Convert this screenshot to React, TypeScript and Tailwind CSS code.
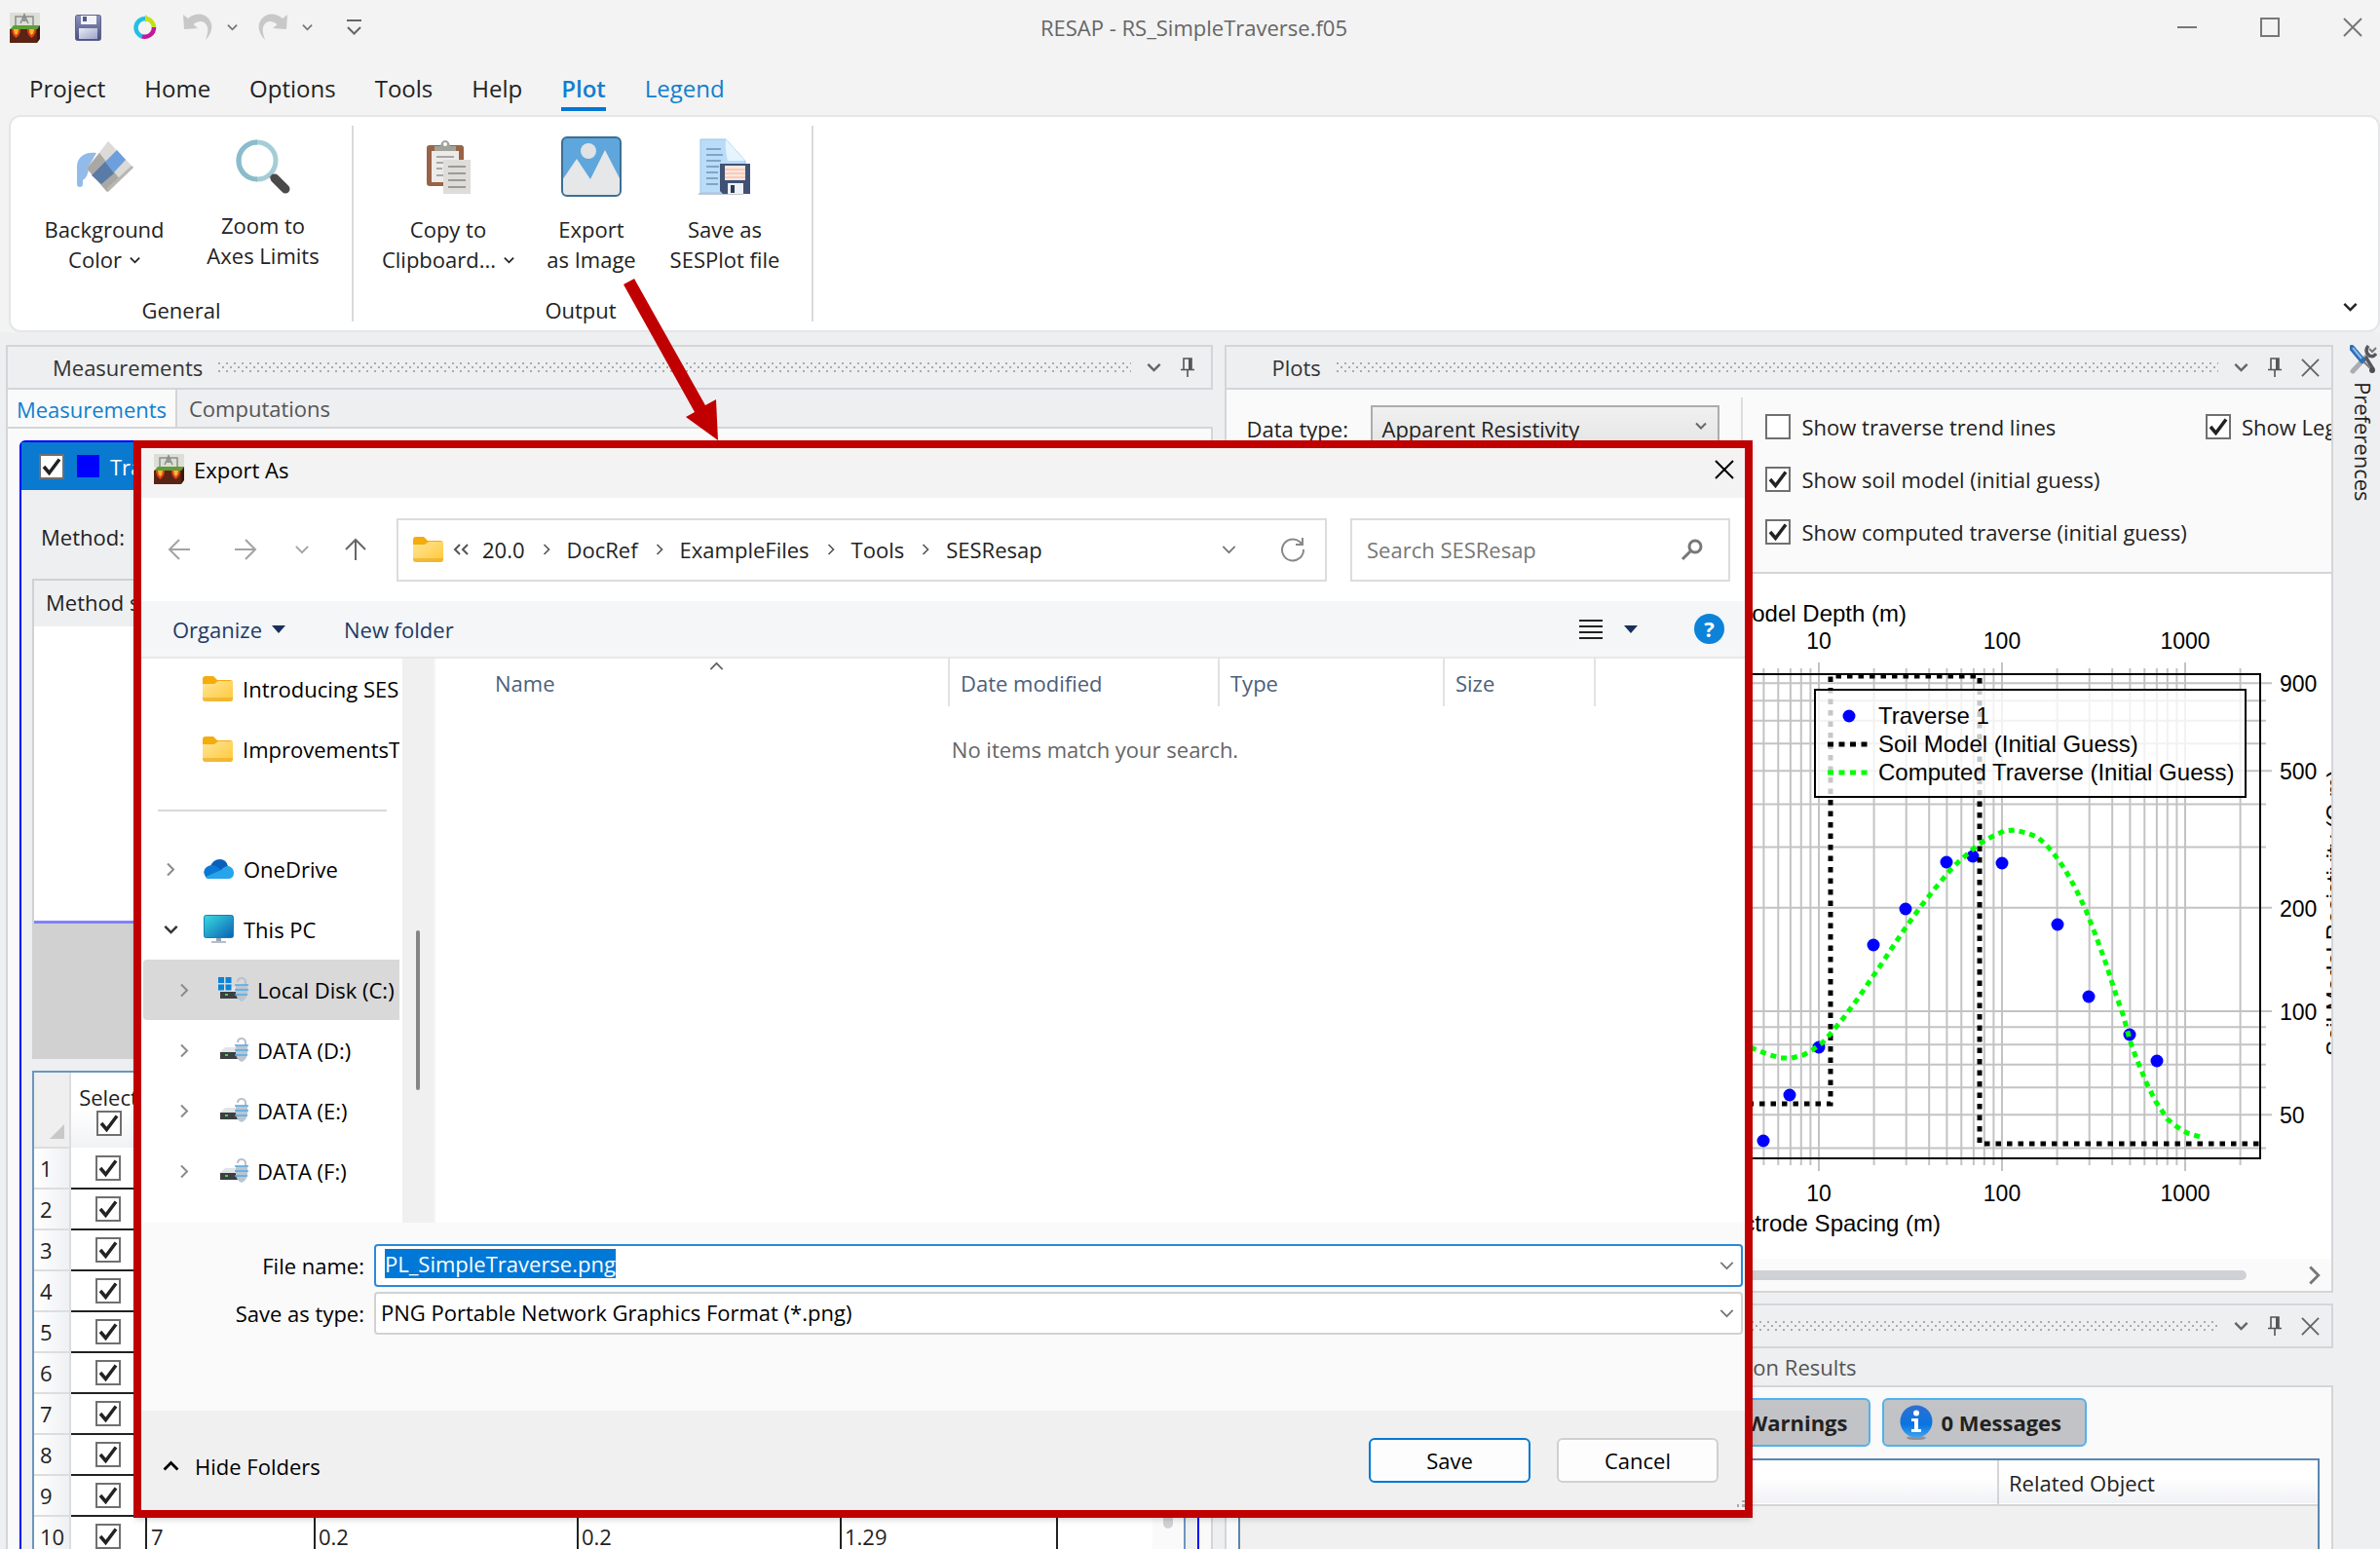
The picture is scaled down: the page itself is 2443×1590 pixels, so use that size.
import { useEffect, useRef, type ReactNode } from 'react';
import { clsx } from 'clsx';

const Chevron = ({ className, dir = 'down' }: { className?: string; dir?: 'down' | 'up' | 'right' }) => {
  const paths = { down: 'M1 4l5 5 5-5', up: 'M1 9l5-5 5 5', right: 'M3 1l6 6-6 6' };
  return (
    <svg viewBox={dir === 'right' ? '0 0 12 14' : '0 0 12 13'} className={clsx('shrink-0', className)} fill="none" stroke="currentColor" strokeWidth="2">
      <path d={paths[dir]} />
    </svg>
  );
};

const Cross = ({ className }: { className?: string }) => (
  <svg viewBox="0 0 20 20" className={clsx('shrink-0', className)} fill="none" stroke="currentColor" strokeWidth="2">
    <path d="M1 1l18 18M19 1L1 19" />
  </svg>
);

const PinIcon = () => (
  <svg viewBox="0 0 14 20" className="h-5 w-3.5 shrink-0" fill="none" stroke="#555" strokeWidth="1.6">
    <path d="M3 12V1h8v11M0 12.5h14M7 13v7" />
    <path d="M9.5 1v11" strokeWidth="3" />
  </svg>
);

const AppIcon = () => (
  <svg viewBox="0 0 31 31" className="size-[31px] shrink-0">
    <path d="M0 0h31v14H0z" fill="#dcdfd6" />
    <path d="M6 14V4h18v10M11 11l4-9 4 9M12 8h6M15 1v8" fill="none" stroke="#8a8f8c" strokeWidth="1.5" />
    <path d="M0 17l4-4h27l-3 4z" fill="#5f9e34" />
    <path d="M0 17h28v14H0z" fill="#5a2414" />
    <path d="M28 17l3-4v14l-3 4z" fill="#3c170c" />
    <path d="M2 17h9q0 6-4.500 9-4.500-3-4.500-9zM18 17h9q0 6-4.500 9-4.500-3-4.500-9z" fill="#e2401c" />
    <path d="M4 17h5q0 4-2.500 6-2.500-2-2.500-6zM20 17h5q0 4-2.500 6-2.500-2-2.500-6z" fill="#f7b92c" />
  </svg>
);

const SaveIcon = () => (
  <svg viewBox="0 0 27 27" className="size-[27px]">
    <defs>
      <linearGradient id="disk" x1="0" y1="0" x2="0" y2="1">
        <stop offset="0" stopColor="#8a93bd" />
        <stop offset="1" stopColor="#4a4f7c" />
      </linearGradient>
      <linearGradient id="diskLabel" x1="0" y1="0" x2="1" y2="1">
        <stop offset="0" stopColor="#e9ebf5" />
        <stop offset="1" stopColor="#9ba3c9" />
      </linearGradient>
    </defs>
    <rect x="0.5" y="0.5" width="26" height="26" rx="2" fill="url(#disk)" stroke="#5d6390" />
    <path d="M6 1h16v9H6z" fill="#f3f4fa" />
    <path d="M8 2h4v5H8z" fill="#4f5b96" />
    <path d="M4 14h19v11H4z" fill="url(#diskLabel)" />
  </svg>
);

const RingIcon = () => (
  <svg viewBox="0 0 24 26" className="h-[26px] w-6" fill="none" strokeWidth="4.500">
    <path d="M12 4A9.500 9.500 0 0 1 21 14" stroke="#c3e01a" />
    <path d="M21 13A9.500 9.500 0 0 1 8 22" stroke="#c2189c" />
    <path d="M9 22.500A9.500 9.500 0 0 1 12 4" stroke="#1fc0e4" />
    <path d="M12 0l5 4-5 4z" fill="#c3e01a" />
  </svg>
);

const UndoIcon = ({ className }: { className?: string }) => (
  <svg viewBox="0 0 32 28" className={clsx('h-7 w-8', className)} fill="#c8c8c8">
    <path d="M1 1l1 15 14-1-4.500-4C17 6 24 7 26 14c1 5-1 9-2 13 6-6 8-14 5-19C25-1 13-2 6 5z" />
  </svg>
);

const BucketIcon = () => (
  <svg viewBox="0 0 60 56" className="h-14 w-[60px]">
    <path d="M22 14C8 12 2 20 2 28v18q0 3 3 3t3-3v-4q6-4 6-14z" fill="#93bbea" />
    <path d="M12 30L34 2l26 27-27 25z" fill="#dcdad6" />
    <path d="M12 30l13-16 21 27-13 13z" fill="#aaa8a4" />
    <path d="M31 23l12-12 9 10-13 14z" fill="#6d9fdc" />
    <path d="M17 37l14-14 9 12-13 11z" fill="#5a7ba6" />
    <path d="M33 50l25-23 2 2-26 25z" fill="#b9b7b3" />
  </svg>
);

const MagnifierIcon = () => (
  <svg viewBox="0 0 56 56" className="size-14" fill="none">
    <circle cx="22" cy="22" r="19" stroke="#a5cdd8" strokeWidth="5" />
    <path d="M22 3a19 19 0 0 0 0 38" stroke="#8abccb" strokeWidth="5" />
    <path d="M36 37l5 5" stroke="#8a8a8a" strokeWidth="5" />
    <path d="M40 40l11 11" stroke="#4a4a4a" strokeWidth="9" strokeLinecap="round" />
  </svg>
);

const ClipboardIcon = () => (
  <svg viewBox="0 0 46 56" className="h-14 w-[46px]">
    <rect x="1" y="6" width="38" height="42" rx="3" fill="#9a6347" />
    <path d="M6 12h28v32H6z" fill="#edebe8" />
    <path d="M9 12V7h6q1-6 5-6t5 6h6v5z" fill="#9fa39a" />
    <circle cx="20" cy="5" r="2" fill="#fff" />
    <path d="M11 18h18M11 24h8M11 30h6M11 37h7" stroke="#a9a7a4" strokeWidth="2" />
    <path d="M18 21h28v35H18z" fill="#dfddda" />
    <path d="M23 28h18M23 35h18M23 42h18M23 49h18" stroke="#9c9a97" strokeWidth="2" />
  </svg>
);

const PictureIcon = () => (
  <svg viewBox="0 0 62 62" className="size-[62px]">
    <rect x="1" y="1" width="60" height="60" rx="5" fill="#5ea6dc" />
    <circle cx="28" cy="15" r="8" fill="#e0e2e4" />
    <path d="M1 45l15-22 14 21 15-30 16 31v12q0 4-4 4H5q-4 0-4-4z" fill="#e6e7e9" />
    <rect x="1" y="1" width="60" height="60" rx="5" fill="none" stroke="#3c6f94" strokeWidth="2" />
  </svg>
);

const PlotFileIcon = () => (
  <svg viewBox="0 0 54 58" className="h-[58px] w-[54px]">
    <path d="M0 56h46v2H0z" fill="#c4c8cc" />
    <path d="M2 1h26l20 22v33H2z" fill="#b9dcf8" stroke="#9cc4e6" />
    <path d="M28 1l20 22H30q-3-10-2-22z" fill="#e6f4fe" />
    <path d="M8 11h15M8 17h17M8 23h15M8 29h13M8 35h12M8 41h12M8 47h12" stroke="#6f93b8" strokeWidth="1.500" />
    <path d="M22 26h31v31H25l-3-3z" fill="#3f5275" />
    <path d="M27 28h21v15H27z" fill="#fde5dd" />
    <path d="M27 32h21M27 36h21M27 40h21" stroke="#f3b29e" />
    <path d="M30 46h16v11H30z" fill="#eef1f5" />
    <path d="M33 48h4v8h-4z" fill="#2d3b57" />
  </svg>
);

const FolderIcon = () => (
  <svg viewBox="0 0 31 26" className="h-[26px] w-[31px] shrink-0">
    <defs>
      <linearGradient id="folder" x1="0" y1="0" x2="1" y2="1">
        <stop offset="0" stopColor="#ffe596" />
        <stop offset="1" stopColor="#ffc83a" />
      </linearGradient>
    </defs>
    <path d="M0 3q0-3 3-3h8l4 4h13q3 0 3 3v4H0z" fill="#f3ac0c" />
    <path d="M0 8h12l4-3h15v18q0 3-3 3H3q-3 0-3-3z" fill="url(#folder)" />
    <path d="M0 23q0 3 3 3h25q3 0 3-3v-1H0z" fill="#e9a91c" opacity=".6" />
  </svg>
);

const OneDriveIcon = () => (
  <svg viewBox="0 0 31 21" className="h-[21px] w-[31px] shrink-0">
    <path d="M7 8Q9 0 17 0q6 0 8 7l-9 6z" fill="#0a5fb8" />
    <path d="M2 18Q-2 12 3 8q6-4 11 0l7 5-9 7H7q-4 0-5-2z" fill="#0a78d4" />
    <path d="M18 11q3-4 8-4 5 2 5 7 0 6-6 6H6q-3 0-4-2z" fill="#27a4ea" />
  </svg>
);

const MonitorIcon = () => (
  <svg viewBox="0 0 31 30" className="h-[30px] w-[31px] shrink-0">
    <defs>
      <linearGradient id="screen" x1="0" y1="0" x2="1" y2="1">
        <stop offset="0" stopColor="#39dce0" />
        <stop offset="1" stopColor="#0b5fb4" />
      </linearGradient>
    </defs>
    <path d="M13 23h5v5h-5z" fill="#9aa7b4" />
    <path d="M8 27h15v2H8z" fill="#b4bec8" />
    <rect x="0.5" y="0.5" width="30" height="23" rx="2" fill="url(#screen)" stroke="#1b7fae" />
  </svg>
);

const DriveIcon = ({ system }: { system?: boolean }) => (
  <svg viewBox="0 0 32 26" className="h-[26px] w-8 shrink-0">
    <path d="M8 10h11v5H3z" fill="#e2e5e8" />
    <path d="M3 15h20v7H3z" fill="#3d4043" />
    <path d="M8 17h3v2H8z" fill="#3ddc3d" />
    <path d="M21 5q0-4 4-4 3 0 4 3v4" fill="none" stroke="#b9c2cb" strokeWidth="2" />
    <path d="M19 8h12v9q-1 6-6 8-5-2-6-8z" fill="#b9c6d2" />
    <path d="M18 8h14M18 13h14M18 18h13" stroke="#56a9e4" strokeWidth="1.500" />
    {system && <path d="M1 0h6v6H1zM8.500 0h6v6h-6zM1 7.500h6v6H1zM8.500 7.500h6v6h-6z" fill="#0a84d8" />}
  </svg>
);

const ToolsIcon = () => (
  <svg viewBox="0 0 28 30" className="h-[30px] w-7" fill="none">
    <path d="M3 27L18 11" stroke="#a9adb1" strokeWidth="5" strokeLinecap="round" />
    <path d="M19 1q-4 5 0 9t8-1M16 12l8 13" stroke="#55595d" strokeWidth="3.500" />
    <path d="M20 4l3 3 4-4" stroke="#777" strokeWidth="2" />
    <path d="M2 3l11 13" stroke="#2e6db4" strokeWidth="6" strokeLinecap="round" />
    <path d="M3 3l9 11" stroke="#8cbcec" strokeWidth="2" />
    <path d="M14 17l7 7" stroke="#777b7f" strokeWidth="2" />
    <circle cx="23" cy="26" r="3" fill="#4b4e52" />
  </svg>
);

const InfoIcon = () => (
  <svg viewBox="0 0 34 36" className="h-9 w-[34px]">
    <defs>
      <linearGradient id="info" x1="0" y1="0" x2="0" y2="1">
        <stop offset="0" stopColor="#2f6fd0" />
        <stop offset=".6" stopColor="#0a74e0" />
        <stop offset="1" stopColor="#3ea4f2" />
      </linearGradient>
    </defs>
    <ellipse cx="17" cy="34" rx="10" ry="2" fill="#8d9096" />
    <circle cx="17" cy="17" r="16.500" fill="url(#info)" />
    <circle cx="17" cy="8.500" r="3" fill="#fff" />
    <path d="M12 14h7v11h3v3H12v-3h3v-8h-3z" fill="#fff" />
  </svg>
);

interface TickProps {
  label?: string;
  name?: string;
  checked?: boolean;
}

// Square WPF style check box; without a visible label it takes an aria-label
const Tick = ({ label, name, checked = true }: TickProps) => (
  <label className="flex shrink-0 items-center gap-[11px] whitespace-nowrap">
    <span className="relative size-[26px] shrink-0">
      <input type="checkbox" defaultChecked={checked} aria-label={name} className="peer block size-[26px] appearance-none border-2 border-[#707070] bg-white" />
      <svg viewBox="0 0 26 26" className="pointer-events-none absolute inset-0 hidden size-[26px] peer-checked:block" fill="none" stroke="#222" strokeWidth="3.500">
        <path d="M5 13l5.500 6.500L21 5.500" />
      </svg>
    </span>
    {label}
  </label>
);

const Dots = ({ id }: { id: string }) => (
  <svg className="h-3 min-w-0 flex-1">
    <defs>
      <pattern id={id} width="8" height="12" patternUnits="userSpaceOnUse">
        <path d="M0 1h2v2H0zM4 5h2v2H4zM0 9h2v2H0z" fill="#a9abad" />
      </pattern>
    </defs>
    <rect width="100%" height="12" fill={`url(#${id})`} />
  </svg>
);

interface PaneHeaderProps {
  title: string;
  id: string;
  closable?: boolean;
  className?: string;
}

const PaneHeader = ({ title, id, closable, className }: PaneHeaderProps) => (
  <div className={clsx('flex h-[46px] shrink-0 items-center border-2 border-[#d4d5d8] bg-[#eeeff1] pl-[46px] text-[#333]', closable ? 'pr-3' : 'pr-[17px]', className)}>
    <h2 className="mr-4">{title}</h2>
    <Dots id={id} />
    <button aria-label={`${title} menu`} className="ml-4">
      <Chevron className="h-4 w-[15px] text-[#666]" />
    </button>
    <button aria-label={`Pin ${title}`} className="ml-5">
      <PinIcon />
    </button>
    {closable && (
      <button aria-label={`Close ${title}`} className="ml-5">
        <Cross className="size-[19px] text-[#666]" />
      </button>
    )}
  </div>
);

interface RibbonButtonProps {
  icon: ReactNode;
  lines: [string, string];
  drop?: boolean;
  raised?: boolean;
  className?: string;
}

const RibbonButton = ({ icon, lines, drop, raised, className }: RibbonButtonProps) => (
  <button className={clsx('flex shrink-0 flex-col items-center leading-[31px] whitespace-nowrap', className)}>
    <span className={clsx('flex h-[66px] items-center justify-center', raised ? 'mb-3' : 'mb-4')}>{icon}</span>
    <span>{lines[0]}</span>
    <span className="flex items-center gap-2">
      {lines[1]}
      {drop && <Chevron className="h-3 w-[11px]" />}
    </span>
  </button>
);

const menus = ['Project', 'Home', 'Options', 'Tools', 'Help', 'Plot', 'Legend'];

const TitleBar = () => (
  <header className="relative flex h-14 shrink-0 items-center pl-[10px]">
    <AppIcon />
    <button aria-label="Save" className="ml-9"><SaveIcon /></button>
    <button aria-label="Refresh" className="ml-[33px]"><RingIcon /></button>
    <button aria-label="Undo" className="ml-[26px]"><UndoIcon /></button>
    <button aria-label="Undo list" className="ml-[14px] text-[#777]"><Chevron className="h-3 w-[11px]" /></button>
    <button aria-label="Redo" className="ml-5"><UndoIcon className="-scale-x-100" /></button>
    <button aria-label="Redo list" className="ml-[14px] text-[#777]"><Chevron className="h-3 w-[11px]" /></button>
    <button aria-label="Customize toolbar" className="ml-[35px]">
      <svg viewBox="0 0 15 16" className="h-4 w-[15px]" fill="none" stroke="#666" strokeWidth="2">
        <path d="M0 1h15M1 8l6.500 6.500L14 8" />
      </svg>
    </button>
    <h1 className="absolute right-0 left-2 mx-auto w-fit text-[#666]">RESAP - RS_SimpleTraverse.f05</h1>
    <div className="ml-auto flex items-center gap-[65px] pr-[18px] text-[#777]">
      <button aria-label="Minimize" className="h-5 w-5">
        <span className="block h-[2px] w-5 bg-[#777]" />
      </button>
      <button aria-label="Maximize" className="size-5 border-2 border-[#777]" />
      <button aria-label="Close"><Cross className="size-5" /></button>
    </div>
  </header>
);

const Ribbon = () => (
  <>
    <nav className="flex h-[62px] shrink-0 items-center gap-10 pl-[30px] text-[24px] text-[#222]">
      {menus.map((menu) => (
        <a
          key={menu}
          href={`#${menu.toLowerCase()}`}
          className={clsx(
            'mt-3.5 border-b-4 pb-[3px] leading-8',
            menu === 'Plot' ? 'border-[#0078d4] font-semibold' : 'border-transparent',
            (menu === 'Plot' || menu === 'Legend') && 'text-[#0f7fd0]',
          )}
        >
          {menu}
        </a>
      ))}
    </nav>
    <section className="ml-[9px] flex h-[223px] shrink-0 rounded-xl border-2 border-[#e4e6e7] bg-white py-[9px]">
      <div className="flex w-[352px] flex-col border-r-2 border-[#d9dadb]">
        <div className="flex pt-[9px] pl-[34px]">
          <RibbonButton icon={<BucketIcon />} lines={['Background', 'Color']} drop className="w-[124px]" />
          <RibbonButton icon={<MagnifierIcon />} lines={['Zoom to', 'Axes Limits']} raised className="ml-[38px] w-[126px]" />
        </div>
        <span className="mt-auto text-center leading-6">General</span>
      </div>
      <div className="flex w-[472px] flex-col border-r-2 border-[#d9dadb]">
        <div className="flex pt-[9px] pl-[26px]">
          <RibbonButton icon={<ClipboardIcon />} lines={['Copy to', 'Clipboard...']} drop className="w-[142px]" />
          <RibbonButton icon={<PictureIcon />} lines={['Export', 'as Image']} className="ml-7 w-24" />
          <RibbonButton icon={<PlotFileIcon />} lines={['Save as', 'SESPlot file']} className="ml-[29px] w-[120px]" />
        </div>
        <span className="mt-auto pr-1 text-center leading-6">Output</span>
      </div>
      <button aria-label="Collapse ribbon" className="mt-auto mr-[21px] mb-[7px] ml-auto">
        <Chevron className="h-4 w-[15px]" />
      </button>
    </section>
  </>
);

const gridRows = [1, 2, 3, 4, 5, 6, 7, 8, 9, 10];

const MeasurementsPane = () => (
  <section className="ml-[6px] flex min-w-0 flex-[1240] flex-col">
    <PaneHeader title="Measurements" id="dots-measurements" />
    <div className="flex h-[38px] shrink-0 border-l-2 border-[#d4d5d8]">
      <button className="-mb-[2px] w-[172px] bg-[#fafafa] text-[#0f7fd0]">Measurements</button>
      <button className="border-l-2 border-[#d4d5d8] pl-3 text-[#555]">Computations</button>
    </div>
    <div className="flex min-h-0 flex-1 flex-col border-2 border-b-0 border-[#d4d5d8] bg-[#fafafa] pt-3 pr-3 pl-3">
      <div className="flex min-h-0 flex-1 flex-col rounded-t-md border-2 border-b-0 border-[#0000ff] bg-[#eeeff1]">
        <div className="flex h-[49px] shrink-0 items-center bg-[#0a79d0] pl-[18px] text-white">
          <Tick name="Use Traverse 1" />
          <span className="mr-[11px] ml-[13px] size-[23px] bg-[#0000ff]" />
          Traverse 1
        </div>
        <div className="flex h-[91px] shrink-0 items-center pt-1 pl-5">Method:</div>
        <div className="mr-3 ml-[11px] shrink-0 border-2 border-[#d0d1d3]">
          <div className="h-[47px] pl-3 leading-[44px]">Method settings</div>
          <div className="h-[305px] border-b-[3px] border-[#8080ff] bg-white" />
          <div className="h-[137px] bg-[#d1d1d1]" />
        </div>
        <div className="mt-3 mr-3 ml-[11px] flex min-h-0 flex-1 overflow-hidden border-2 border-b-0 border-[#6b96bd] bg-white">
          <table className="w-full table-fixed border-collapse self-start">
            <thead>
              <tr className="h-[77px] bg-linear-to-b from-white from-50% to-[#f1f2f5]">
                <th className="w-[37px] border-r-2 border-b-2 border-[#dcdddf] bg-[#efefef] align-bottom">
                  <svg viewBox="0 0 15 15" className="mb-2 ml-4 size-[15px]">
                    <path d="M15 0v15H0z" fill="#c8c8c8" />
                  </svg>
                </th>
                <th className="w-[78px] font-normal">
                  <div className="flex flex-col items-center leading-[27px]">
                    Select
                    <Tick name="Select all" />
                  </div>
                </th>
                <th className="w-[173px]" />
                <th className="w-[270px]" />
                <th className="w-[270px]" />
                <th className="w-[222px]" />
                <th />
              </tr>
            </thead>
            <tbody>
              {gridRows.map((row) => (
                <tr key={row} className="h-[42px]">
                  <th className="border-r-2 border-b-2 border-[#dcdddf] bg-linear-to-r from-white to-[#eff0f3] pl-1.5 text-left font-normal">{row}</th>
                  <td className="border-r-2 border-b-2 border-[#222]">
                    <div className="flex justify-center">
                      <Tick name={`Select row ${row}`} />
                    </div>
                  </td>
                  <td className="border-r-2 border-b-2 border-[#222] pl-1">7</td>
                  <td className="border-r-2 border-b-2 border-[#222] pl-[3px]">0.2</td>
                  <td className="border-r-2 border-b-2 border-[#222] pl-[3px]">0.2</td>
                  <td className="border-r-2 border-b-2 border-[#222] pl-[3px]">1.29</td>
                  <td className="border-b-2 border-[#222]" />
                </tr>
              ))}
            </tbody>
          </table>
          <div className="flex w-8 shrink-0 justify-center bg-[#fafafa]">
            <div className="h-[468px] w-2.5 rounded-full bg-[#d0d1d4]" />
          </div>
        </div>
      </div>
    </div>
  </section>
);

// Chart geometry: both axes are logarithmic
const toX = (v: number) => 608 + 188 * (Math.log10(v) - 1);
const toY = (v: number) => 449 - 353 * (Math.log10(v) - 2);
const PLOT = { left: 110, right: 1061, top: 103, bottom: 600 };

const xLines = [1, 10, 100].flatMap((d) => [1, 2, 3, 4, 5, 6, 7, 8, 9].map((m) => m * d)).concat([1000, 2000]);
const yLines = [40, 50, 60, 70, 80, 90, 100, 200, 300, 400, 500, 600, 700, 800, 900];
const yLabels = [50, 100, 200, 500, 900];

const readings = [
  [551, 582], [578, 535], [608, 486], [664, 381], [697, 344], [739, 296],
  [766, 290], [796, 297], [853, 360], [885, 434], [927, 473], [955, 500],
];

const computed = [
  [538, 486], [547, 490], [558, 494], [569, 497], [580, 497], [592, 494], [601, 489], [612, 481],
  [620, 472], [634, 455], [648, 436], [661, 417], [674, 398], [687, 378], [700, 359], [713, 341],
  [728, 322], [743, 304], [751, 296], [768, 281], [779, 273], [798, 264], [809, 263], [821, 266],
  [832, 270], [841, 278], [849, 287], [861, 304], [872, 324], [882, 345], [891, 368], [902, 398],
  [913, 432], [921, 455], [927, 478], [933, 495], [944, 522], [954, 542], [966, 560], [976, 568],
  [986, 574], [999, 578],
];

const Chart = () => (
  <svg viewBox="0 0 1136 703" className="block h-[703px] w-[1136px] font-['Liberation_Sans',Arial,sans-serif] text-[24px]" role="img" aria-label="Apparent resistivity plot">
    <text x="698" y="49" textAnchor="end">Soil Model Depth (m)</text>
    <text x="733" y="675" textAnchor="end">Electrode Spacing (m)</text>
    {[10, 100, 1000].map((v) => (
      <g key={v} textAnchor="middle" className="text-[23px]">
        <text x={toX(v)} y="77">{v}</text>
        <text x={toX(v)} y="644">{v}</text>
      </g>
    ))}
    <g stroke="#c3c3c3" strokeWidth="2">
      {xLines.map((v) => {
        const major = v === 10 || v === 100 || v === 1000;
        return <path key={v} d={`M${toX(v)} ${major ? 91 : 97}V${major ? 613 : 607}`} />;
      })}
      {yLines.map((v) => (
        <path key={v} d={`M${PLOT.left} ${toY(v)}H${yLabels.includes(v) ? 1073 : 1067}`} />
      ))}
    </g>
    {yLabels.map((v) => (
      <text key={v} x="1081" y={toY(v) + 9} className="text-[23px]">{v}</text>
    ))}
    <rect x={PLOT.left} y={PLOT.top} width={PLOT.right - PLOT.left} height={PLOT.bottom - PLOT.top} fill="none" stroke="#000" strokeWidth="2" />
    <g fill="#0000ff">
      {readings.map(([x, y]) => (
        <circle key={x} cx={x} cy={y} r="6.500" />
      ))}
    </g>
    <path d="M110 544H620V105H773V585H1061" fill="none" stroke="#000" strokeWidth="5" strokeDasharray="5.500 6" />
    <polyline points={computed.map((p) => p.join(',')).join(' ')} fill="none" stroke="#00ff00" strokeWidth="5" strokeDasharray="6 5" />
    <rect x="604" y="119" width="442" height="110" fill="#fff" fillOpacity=".78" stroke="#000" strokeWidth="2" />
    <circle cx="639" cy="146" r="6.500" fill="#0000ff" />
    <path d="M617 175h41" stroke="#000" strokeWidth="5" strokeDasharray="6 5.500" />
    <path d="M617 204h41" stroke="#00ff00" strokeWidth="5" strokeDasharray="6 5.500" />
    <text x="669" y="154">Traverse 1</text>
    <text x="669" y="183">Soil Model (Initial Guess)</text>
    <text x="669" y="212">Computed Traverse (Initial Guess)</text>
    <text transform="translate(1146 495) rotate(-90)">Soil Model Resistivity (Ω.m)</text>
  </svg>
);

const PlotsPane = () => (
  <section className="ml-3 flex min-w-0 flex-[1138] flex-col">
    <PaneHeader title="Plots" id="dots-plots" closable />
    <div className="flex shrink-0 flex-col border-2 border-t-0 border-[#d4d5d8] bg-[#fafafa]">
      <div className="flex h-[189px] overflow-hidden border-b-2 border-[#d4d5d8] pt-2">
        <div className="flex shrink-0 items-start border-r-2 border-[#dcdddf] pt-2 pr-[22px] pl-[20px]">
          <label htmlFor="data-type" className="w-[128px] pt-1.5 leading-9">Data type:</label>
          <div className="relative">
            <select id="data-type" className="block h-[48px] w-[358px] appearance-none border-2 border-[#acacac] bg-linear-to-b from-[#f0f0f0] to-[#e4e4e4] px-[9px]">
              <option>Apparent Resistivity</option>
            </select>
            <Chevron className="pointer-events-none absolute top-3.5 right-[13px] h-3.5 w-3 text-[#666]" />
          </div>
        </div>
        <div className="flex shrink-0 flex-col gap-6 pt-[15px] pl-[23px]">
          <Tick label="Show traverse trend lines" checked={false} />
          <Tick label="Show soil model (initial guess)" />
          <Tick label="Show computed traverse (initial guess)" />
        </div>
        <div className="ml-auto w-[129px] shrink-0 overflow-hidden pt-[15px]">
          <Tick label="Show Legend" />
        </div>
      </div>
      <div className="overflow-hidden bg-white">
        <Chart />
      </div>
      <div className="flex h-[33px] items-center pr-[9px] pl-10">
        <div className="h-2.5 flex-1 rounded-full bg-[#d0d1d4]" />
        <Chevron dir="right" className="ml-[61px] h-5 w-[17px] text-[#777]" />
      </div>
    </div>
    <PaneHeader title="Messages" id="dots-messages" closable className="mt-[11px]" />
    <div className="flex h-[38px] shrink-0 items-center pl-[10px] text-[#555]">
      <button className="w-[424px] text-left">Messages</button>
      <button>Computation Results</button>
    </div>
    <div className="flex min-h-0 flex-1 flex-col border-2 border-b-0 border-[#d4d5d8] bg-[#fafafa] px-3 pt-[11px]">
      <div className="flex shrink-0 gap-3 pl-[301px] font-bold">
        <button className="h-[50px] w-[180px] rounded-md border-2 border-[#4db3ef] bg-[#c2c3c7]">0 Errors</button>
        <button className="h-[50px] w-[156px] rounded-md border-2 border-[#4db3ef] bg-[#c2c3c7] pr-[22px] text-right whitespace-nowrap">0 Warnings</button>
        <button className="flex h-[50px] w-[210px] items-center gap-2 rounded-md border-2 border-[#4db3ef] bg-[#c2c3c7] pl-4">
          <InfoIcon />
          0 Messages
        </button>
      </div>
      <div className="mt-3 min-h-0 flex-1 border-2 border-b-0 border-[#5b86b0] bg-[#f0f0f0]">
        <table className="w-full table-fixed border-collapse">
          <thead>
            <tr className="h-[46px] border-b-2 border-[#d4d5d8] bg-linear-to-b from-white from-40% to-[#f1f2f5] text-left">
              <th className="border-r-2 border-[#d4d5d8] pl-3 font-normal">Description</th>
              <th className="w-[328px] pl-[10px] font-normal">Related Object</th>
            </tr>
          </thead>
        </table>
      </div>
    </div>
  </section>
);

const crumbs = ['20.0', 'DocRef', 'ExampleFiles', 'Tools', 'SESResap'];
const folders = ['Introducing SES', 'ImprovementsTo'];
const drives = ['Local Disk (C:)', 'DATA (D:)', 'DATA (E:)', 'DATA (F:)'];

const FolderTree = () => (
  <nav className="w-[268px] shrink-0 overflow-hidden whitespace-nowrap text-black">
    {folders.map((folder) => (
      <a key={folder} href={`#${folder}`} className="mr-[3px] flex h-[62px] items-center gap-2.5 overflow-hidden pl-[63px]">
        <FolderIcon />
        {folder}
      </a>
    ))}
    <hr className="mt-[31px] mr-4 mb-[28px] ml-[17px] border-t-2 border-[#d9d9d9]" />
    <a href="#onedrive" className="flex h-[62px] items-center pl-6">
      <Chevron dir="right" className="mr-7 h-[17px] w-3 text-[#8a8a8a]" />
      <OneDriveIcon />
      <span className="ml-2.5">OneDrive</span>
    </a>
    <a href="#this-pc" className="flex h-[62px] items-center pl-[22px]">
      <Chevron className="mr-[25px] h-4 w-[17px] text-[#333]" />
      <MonitorIcon />
      <span className="ml-2.5">This PC</span>
    </a>
    {drives.map((drive, i) => (
      <a key={drive} href={`#drive-${i}`} className={clsx('mr-[3px] ml-[2px] flex h-[62px] items-center rounded-l-sm pl-9', i === 0 && 'bg-[#d9d9d9]')}>
        <Chevron dir="right" className="mr-7 h-[17px] w-3 text-[#8a8a8a]" />
        <DriveIcon system={i === 0} />
        <span className="ml-[9px]">{drive}</span>
      </a>
    ))}
  </nav>
);

const ExportDialog = () => {
  const fileName = useRef<HTMLInputElement>(null);

  useEffect(() => {
    fileName.current?.focus({ preventScroll: true });
    fileName.current?.select();
  }, []);

  return (
    <div role="dialog" aria-label="Export As" className="absolute top-[452px] right-[644px] left-[137px] flex flex-col border-8 border-[#c00000] bg-white shadow-md">
      <div className="flex h-[51px] items-center bg-[#f3f3f3] pr-[11px] pb-2 pl-[13px] text-black">
        <AppIcon />
        <h2 className="ml-2.5">Export As</h2>
        <button aria-label="Close dialog" className="ml-auto"><Cross className="size-5" /></button>
      </div>

      <div className="flex h-[106px] items-center pr-[15px] pl-[27px]">
        <button aria-label="Back">
          <svg viewBox="0 0 24 22" className="h-[22px] w-6" fill="none" stroke="#a3a3a3" strokeWidth="2"><path d="M23 11H2M12 1L2 11l10 10" /></svg>
        </button>
        <button aria-label="Forward" className="ml-11">
          <svg viewBox="0 0 24 22" className="h-[22px] w-6" fill="none" stroke="#a3a3a3" strokeWidth="2"><path d="M1 11h21M12 1l10 10-10 10" /></svg>
        </button>
        <button aria-label="Recent locations" className="ml-[38px] text-[#a3a3a3]"><Chevron className="h-4 w-4 stroke-[1.5]" /></button>
        <button aria-label="Up" className="ml-[36px]">
          <svg viewBox="0 0 22 24" className="h-6 w-[22px]" fill="none" stroke="#666" strokeWidth="2"><path d="M11 23V2M1 12L11 2l10 10" /></svg>
        </button>
        <div className="ml-[31px] flex h-[65px] flex-1 items-center border-2 border-[#dcdcdc] pr-5 pl-[15px] text-[#222]">
          <FolderIcon />
          <svg viewBox="0 0 16 12" className="mr-[14px] ml-2.5 h-3 w-4" fill="none" stroke="#555" strokeWidth="2"><path d="M7 1L2 6l5 5M15 1l-5 5 5 5" /></svg>
          {crumbs.map((crumb, i) => (
            <span key={crumb} className="flex items-center">
              {i > 0 && <Chevron dir="right" className="mr-4 ml-[17px] h-3 w-2.5 text-[#555]" />}
              <a href={`#${crumb}`}>{crumb}</a>
            </span>
          ))}
          <button aria-label="Previous locations" className="ml-auto text-[#777]"><Chevron className="h-4 w-[17px] stroke-[1.5]" /></button>
          <button aria-label="Reload" className="ml-[44px]">
            <svg viewBox="0 0 26 26" className="size-[26px]" fill="none" stroke="#888" strokeWidth="2"><path d="M24 13A11 11 0 1 1 20 5l2 2M23 1v7h-7" /></svg>
          </button>
        </div>
        <div className="relative ml-6">
          <input type="search" aria-label="Search SESResap" placeholder="Search SESResap" className="block h-[65px] w-[390px] border-2 border-[#dcdcdc] pr-14 pl-[15px] placeholder:text-[#777]" />
          <svg viewBox="0 0 24 24" className="pointer-events-none absolute top-5 right-[27px] size-6" fill="none" stroke="#777" strokeWidth="3"><circle cx="15" cy="9" r="6" /><path d="M11 13l-9 9" /></svg>
        </div>
      </div>

      <div className="flex h-[59px] items-center border-b-2 border-[#e6e8eb] bg-[#f4f6f8] pr-[21px] pl-8 text-[#1e3a66]">
        <button className="flex items-center gap-2.5">
          Organize
          <svg viewBox="0 0 14 8" className="h-2 w-3.5"><path d="M0 0h14L7 8z" fill="#17305c" /></svg>
        </button>
        <button className="ml-[60px]">New folder</button>
        <button aria-label="Change view" className="ml-auto flex items-center gap-[22px]">
          <svg viewBox="0 0 24 22" className="h-[22px] w-6" stroke="#222" strokeWidth="2"><path d="M0 2h24M0 8h24M0 14h24M0 20h24" /></svg>
          <svg viewBox="0 0 14 8" className="h-2 w-3.5"><path d="M0 0h14L7 8z" fill="#17305c" /></svg>
        </button>
        <button aria-label="Help" className="ml-[58px] size-[31px] rounded-full bg-[#0c83d9] leading-[31px] font-bold text-white">?</button>
      </div>

      <div className="flex h-[579px]">
        <FolderTree />
        <div className="flex w-8 shrink-0 justify-center bg-[#f0f0f0] pt-[279px]">
          <div className="h-[164px] w-1 rounded-full bg-[#858585]" />
        </div>
        <div className="relative flex-1 border-l-2 border-[#f5f5f5]">
          <table className="table-fixed text-left text-[#4c607a]">
            <thead>
              <tr className="h-[49px]">
                <th className="w-[527px] border-r-2 border-[#e2e2e2] pl-[61px] font-normal">Name</th>
                <th className="w-[277px] border-r-2 border-[#e2e2e2] pl-[11px] font-normal">Date modified</th>
                <th className="w-[231px] border-r-2 border-[#e2e2e2] pl-[11px] font-normal">Type</th>
                <th className="w-[155px] border-r-2 border-[#e2e2e2] pl-[11px] font-normal">Size</th>
              </tr>
            </thead>
          </table>
          <Chevron dir="up" className="absolute top-0 left-[281px] h-4 w-[15px] stroke-[1.5] text-[#666]" />
          <p className="mt-[29px] pl-2.5 text-center text-[#666]">No items match your search.</p>
        </div>
      </div>

      <div className="grid h-[193px] grid-cols-[229px_1fr] content-start items-center gap-x-2.5 gap-y-[5px] bg-[#fafafa] pt-[22px] pr-[2px] text-black">
        <label htmlFor="file-name" className="text-right">File name:</label>
        <div className="relative">
          <input ref={fileName} id="file-name" defaultValue="PL_SimpleTraverse.png" className="block h-11 w-full rounded-sm border-2 border-[#2b8ad8] bg-white px-[9px] pb-1 outline-none selection:bg-[#0078d7] selection:text-white" />
          <Chevron className="pointer-events-none absolute top-3.5 right-2 h-4 w-[17px] stroke-[1.5] text-[#777]" />
        </div>
        <label htmlFor="file-type" className="text-right">Save as type:</label>
        <div className="relative">
          <select id="file-type" className="block h-11 w-full appearance-none rounded-sm border-2 border-[#d2d2d2] bg-white px-[5px] pb-0.5">
            <option>PNG Portable Network Graphics Format (*.png)</option>
          </select>
          <Chevron className="pointer-events-none absolute top-3.5 right-2 h-4 w-[17px] stroke-[1.5] text-[#777]" />
        </div>
      </div>

      <div className="relative flex h-[102px] items-center bg-[#f0f0f0] pr-[27px] pl-[22px] text-black">
        <button className="mt-3 flex items-center gap-4">
          <Chevron dir="up" className="h-[18px] w-[17px]" />
          Hide Folders
        </button>
        <button className="ml-auto h-[46px] w-[166px] rounded-md border-2 border-[#0078d4] bg-[#fdfdfd]">Save</button>
        <button className="ml-[27px] h-[46px] w-[166px] rounded-md border-2 border-[#d0d0d0] bg-[#fdfdfd]">Cancel</button>
        <svg viewBox="0 0 8 8" className="absolute right-0 bottom-0.5 size-2"><path d="M5 0h3v2H5zM0 4h2v3H0zM5 4h3v3H5z" fill="#aaa" /></svg>
      </div>
    </div>
  );
};

export default function App() {
  return (
    <div className="relative flex h-screen w-full flex-col overflow-hidden bg-[#f3f3f3] font-['Open_Sans','Noto_Sans',sans-serif] text-[22px] leading-[30px] text-[#222]">
      <TitleBar />
      <Ribbon />
      <main className="flex min-h-0 flex-1 bg-[#eeeff1] pt-[13px]">
        <MeasurementsPane />
        <PlotsPane />
        <aside className="flex w-12 shrink-0 flex-col items-end pr-[3px]">
          <ToolsIcon />
          <button className="mt-2 leading-7 [writing-mode:vertical-rl]">Preferences</button>
        </aside>
      </main>

      {/* Arrow from the Export button to the dialog */}
      <svg viewBox="0 0 104 172" className="pointer-events-none absolute top-[280px] left-[636px] h-[172px] w-[104px]">
        <path d="M4 12l11-6 73 130 11-6 2 42-33-24 9-5z" fill="#c00000" />
      </svg>
      <ExportDialog />
    </div>
  );
}
